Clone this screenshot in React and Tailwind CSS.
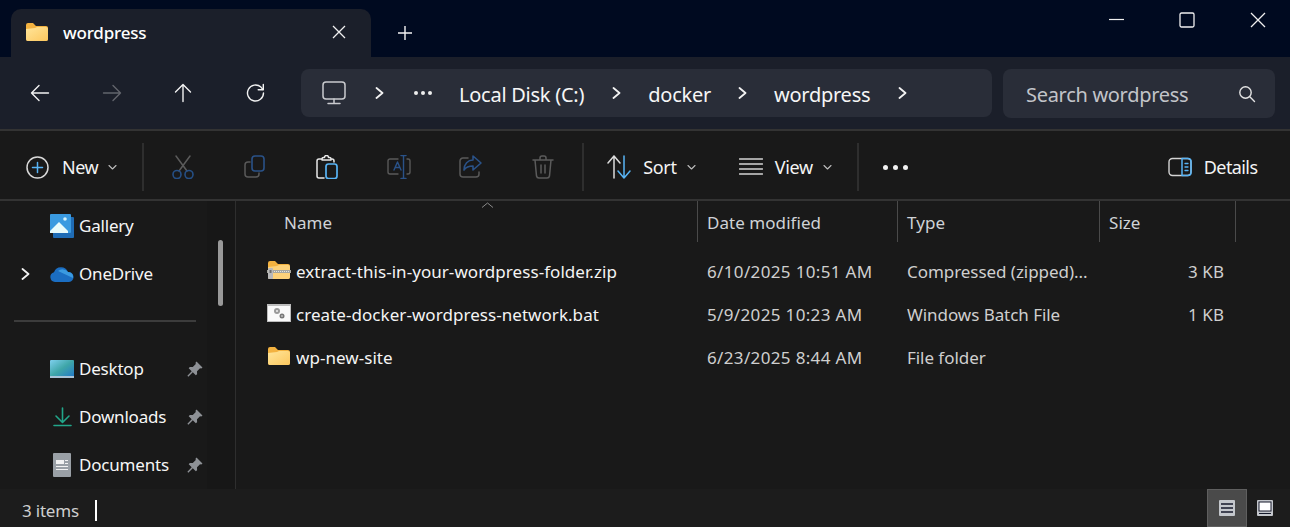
import React from "react";

const Folder = ({ className = "" }) => (
  <svg width="24" height="20" viewBox="0 0 24 20" className={className}>
    <defs>
      <linearGradient id="fg" x1="0" y1="0" x2="1" y2="1">
        <stop offset="0" stopColor="#ffe59a" />
        <stop offset="1" stopColor="#fcc75e" />
      </linearGradient>
    </defs>
    <path d="M1 3a2 2 0 0 1 2-2h5l3 3h10a2 2 0 0 1 2 2v11a2 2 0 0 1-2 2H3a2 2 0 0 1-2-2z" fill="#f3b240" />
    <path d="M1 7l9-1 2-1h9a2 2 0 0 1 2 2v10a2 2 0 0 1-2 2H3a2 2 0 0 1-2-2z" fill="url(#fg)" />
  </svg>
);

const Zip = () => (
  <svg width="24" height="20" viewBox="0 0 24 20">
    <path d="M1 3a2 2 0 0 1 2-2h5l3 3h10a2 2 0 0 1 2 2v11a2 2 0 0 1-2 2H3a2 2 0 0 1-2-2z" fill="#f3b240" />
    <path d="M1 7l9-1 2-1h9a2 2 0 0 1 2 2v10a2 2 0 0 1-2 2H3a2 2 0 0 1-2-2z" fill="#fdd27a" />
    <rect x="0" y="10" width="24" height="3" fill="#a8a8a0" />
    <rect x="1" y="8" width="5" height="11" rx="1" fill="#b9b9b9" />
    <rect x="2.5" y="10" width="2" height="3" fill="#6d6d6d" />
    <path d="M7 11.500h16" stroke="#e6e6e0" strokeDasharray="1 1" />
  </svg>
);

const Bat = () => (
  <svg width="24" height="18" viewBox="0 0 24 18">
    <rect x="0" y="0" width="24" height="18" fill="#bdbdbd" />
    <rect x="1" y="2" width="22" height="15" fill="#fafafa" />
    <circle cx="10" cy="7" r="3" fill="#9a9a9a" />
    <circle cx="10" cy="7" r="1" fill="#eee" />
    <circle cx="15" cy="12" r="2.500" fill="#777" />
    <circle cx="15" cy="12" r="0.800" fill="#eee" />
  </svg>
);

const Stroke = ({ size = 24, children, className = "", vb }) => (
  <svg
    width={size}
    height={size}
    viewBox={vb || `0 0 ${size} ${size}`}
    fill="none"
    strokeLinecap="round"
    strokeLinejoin="round"
    className={"shrink-0 " + className}
  >
    {children}
  </svg>
);

const Chevron = () => (
  <Stroke size={12}>
    <path d="M2.500 1L8.500 6L2.500 11" stroke="#f2f2f2" strokeWidth="1.800" />
  </Stroke>
);

const Down = () => (
  <Stroke size={9}>
    <path d="M1 2.500L4.500 6L8 2.500" stroke="#bdbdbd" strokeWidth="1.100" />
  </Stroke>
);

const Pin = () => (
  <svg width="16" height="16" viewBox="0 0 16 16" className="shrink-0">
    <path d="M9.500 0.500l6 6-1.200 1-1.300-.3-3 3 .1 3-1.300 1.100-3-3L1.300 15.700.4 14.800l4.300-4.600-3-3L2.800 6l3 .1 3-3L8.500 1.700z" fill="#8e9196" />
  </svg>
);

const HeaderCell = ({ w, children }) => (
  <div className="flex h-full shrink-0 items-center border-r border-[#4a4a4a] pl-[9px] pt-[2px] tracking-[0.05px] text-[#cfd2d6]" style={{ width: w }}>
    {children}
  </div>
);

const Row = ({ icon, name, date, type, size }) => (
  <div className="flex h-[43px] items-center tracking-[0.05px] text-[#f4f4f4]">
    <div className="mb-[3px] flex w-[29px] shrink-0 items-center justify-start">{icon}</div>
    <div className="w-[411px] shrink-0 truncate">{name}</div>
    <div className="w-[200px] shrink-0 truncate tracking-[0.35px] text-[#cfcfcf]">{date}</div>
    <div className="w-[200px] shrink-0 truncate tracking-[-0.05px] text-[#cfcfcf]">{type}</div>
    <div className="w-[117px] shrink-0 text-right text-[#cfcfcf]">{size}</div>
  </div>
);

const Side = ({ chevron, icon, name, pin }) => (
  <div className="flex h-[48px] items-center text-[#f6f6f6]">
    <div className="flex w-[50px] shrink-0 items-center pl-[20px]">{chevron && <Chevron />}</div>
    <div className="flex w-[29px] shrink-0 items-center">{icon}</div>
    <div className="w-[108px] shrink-0">{name}</div>
    {pin && <Pin />}
  </div>
);

const TB = ({ ml = 0, children, w = 24 }) => (
  <div className="flex shrink-0 items-center justify-center" style={{ marginLeft: ml, width: w }}>
    {children}
  </div>
);

const Divider = ({ ml }) => <div className="h-[48px] w-[2px] shrink-0 bg-[#2e2e2e]" style={{ marginLeft: ml }} />;

export default function App() {
  return (
    <div
      className="flex h-[527px] w-[1290px] flex-col overflow-hidden bg-[#191919] text-white"
      style={{ fontFamily: '"Noto Sans", "Open Sans", sans-serif' }}
    >
      {/* tab strip */}
      <div className="flex h-[57px] shrink-0 bg-[#000a20]">
        <div className="ml-[11px] mt-[9px] flex h-[48px] w-[360px] items-center rounded-t-[10px] bg-[#1b1f2a]">
          <Folder className="ml-[14px] mb-[2px] shrink-0" />
          <span className="ml-[14px] text-[17px] font-medium tracking-[-0.2px] text-white">wordpress</span>
          <svg width="14" height="14" viewBox="0 0 14 14" fill="none" className="ml-auto mr-[25px] mb-[3px]">
            <path d="M1 1l12 12M13 1L1 13" stroke="#f0f0f0" strokeWidth="1.300" />
          </svg>
        </div>
        <svg width="16" height="16" viewBox="0 0 16 16" fill="none" className="ml-[26px] mt-[25px]">
          <path d="M8 1v14M1 8h14" stroke="#f4f4f4" strokeWidth="1.400" />
        </svg>
        <div className="ml-auto flex pr-[24px] pt-[12px]">
          <svg width="16" height="16" viewBox="0 0 16 16" fill="none">
            <path d="M0 7.500h15" stroke="#f0f0f0" strokeWidth="1.200" />
          </svg>
          <svg width="16" height="16" viewBox="0 0 16 16" fill="none" className="ml-[54px]">
            <rect x="1" y="1" width="14" height="14" rx="1.500" stroke="#f0f0f0" strokeWidth="1.300" />
          </svg>
          <svg width="16" height="16" viewBox="0 0 16 16" fill="none" className="ml-[55px]">
            <path d="M1 1l14 14M15 1L1 15" stroke="#f0f0f0" strokeWidth="1.300" />
          </svg>
        </div>
      </div>

      {/* navigation */}
      <div className="flex h-[72px] shrink-0 items-center bg-[#1b1f2a] pl-[28px]">
        <TB>
          <Stroke size={20}>
            <path d="M1.500 10h17M9 2.500L1.500 10L9 17.500" stroke="#f2f2f2" strokeWidth="1.400" />
          </Stroke>
        </TB>
        <TB ml={48}>
          <Stroke size={20}>
            <path d="M1.500 10h17M11 2.500L18.500 10L11 17.500" stroke="#62656c" strokeWidth="1.400" />
          </Stroke>
        </TB>
        <TB ml={47}>
          <Stroke size={20}>
            <path d="M10 18.500V1.500M2.500 9L10 1.500L17.500 9" stroke="#f2f2f2" strokeWidth="1.400" />
          </Stroke>
        </TB>
        <TB ml={49}>
          <Stroke size={20}>
            <path d="M17.500 10a8 8 0 1 1-2.600-5.900L17 6.500" stroke="#f2f2f2" strokeWidth="1.400" />
            <path d="M17.300 1.500V6.700H12.200" stroke="#f2f2f2" strokeWidth="1.400" />
          </Stroke>
        </TB>
        <div className="ml-[33px] flex h-[48px] w-[691px] shrink-0 items-center rounded-[8px] bg-[#292d38] text-[20px] tracking-[-0.25px] text-[#f6f6f6]">
          <Stroke size={24} className="ml-[21px]">
            <rect x="1" y="1" width="22" height="17" rx="3" stroke="#c9cace" strokeWidth="1.500" />
            <path d="M12 18v4M6 22.500h12" stroke="#c9cace" strokeWidth="1.500" />
          </Stroke>
          <div className="ml-[28px]"><Chevron /></div>
          <div className="ml-[28px] flex w-[18px] justify-between">
            <i className="block h-[4px] w-[4px] rounded-full bg-[#eee]" />
            <i className="block h-[4px] w-[4px] rounded-full bg-[#eee]" />
            <i className="block h-[4px] w-[4px] rounded-full bg-[#eee]" />
          </div>
          <span className="ml-[27px] pt-[4px]">Local Disk (C:)</span>
          <div className="ml-[27px]"><Chevron /></div>
          <span className="ml-[25px] pt-[4px]">docker</span>
          <div className="ml-[26px]"><Chevron /></div>
          <span className="ml-[25px] pt-[4px]">wordpress</span>
          <div className="ml-[27px]"><Chevron /></div>
        </div>
        <div className="ml-[11px] flex h-[49px] w-[272px] shrink-0 items-center justify-between rounded-[8px] bg-[#292d38] pl-[23px] pr-[19px] text-[20px] tracking-[-0.3px] text-[#c2c4c9]">
          <span className="pt-[3px]">Search wordpress</span>
          <Stroke size={18} className="mt-[2px]">
            <circle cx="7.500" cy="7.500" r="5.700" stroke="#e4e4e4" strokeWidth="1.400" />
            <path d="M11.800 11.800L16.500 16.500" stroke="#e4e4e4" strokeWidth="1.400" />
          </Stroke>
        </div>
      </div>

      {/* toolbar */}
      <div className="flex h-[72px] shrink-0 items-center border-y-2 border-[#333333] bg-[#191919] pl-[26px] pt-[4px] text-[18px] tracking-[-0.3px]">
        <Stroke size={23}>
          <circle cx="11.500" cy="11.500" r="10.500" stroke="#d8d8d8" strokeWidth="1.500" />
          <path d="M11.500 6.500v10M6.500 11.500h10" stroke="#58b4f5" strokeWidth="1.500" />
        </Stroke>
        <span className="ml-[13px] tracking-[-0.5px] text-[#f4f4f4]">New</span>
        <div className="ml-[10px]"><Down /></div>
        <Divider ml={25} />
        <TB ml={27}>
          <Stroke size={24}>
            <path d="M5 1l11 15M19 1L8 16" stroke="#5b5b5b" strokeWidth="1.500" />
            <circle cx="6" cy="19.500" r="4" stroke="#254f85" strokeWidth="1.600" />
            <circle cx="18" cy="19.500" r="4" stroke="#254f85" strokeWidth="1.600" />
          </Stroke>
        </TB>
        <TB ml={48}>
          <Stroke size={24}>
            <path d="M7 7H5a3 3 0 0 0-3 3v9a3 3 0 0 0 3 3h8a3 3 0 0 0 3-3v-1" stroke="#595959" strokeWidth="1.500" />
            <rect x="9" y="1" width="12" height="15" rx="3" stroke="#2a5288" strokeWidth="1.600" />
          </Stroke>
        </TB>
        <TB ml={48}>
          <Stroke size={24}>
            <path d="M7 4H4a2 2 0 0 0-2 2v15a2 2 0 0 0 2 2h5" stroke="#e8e8e8" strokeWidth="1.500" />
            <path d="M7 4a1.500 1.500 0 0 1 1.500-1.500h1a2 2 0 0 1 4 0h1A1.500 1.500 0 0 1 16 4v1H7zM16 4h1a2 2 0 0 1 2 2v1" stroke="#e8e8e8" strokeWidth="1.500" />
            <rect x="11" y="9" width="11" height="14.500" rx="2.500" stroke="#58b4f5" strokeWidth="1.700" />
          </Stroke>
        </TB>
        <TB ml={48}>
          <Stroke size={24}>
            <path d="M11 4H3a2 2 0 0 0-2 2v11a2 2 0 0 0 2 2h8M20 4h1a2 2 0 0 1 2 2v11a2 2 0 0 1-2 2h-1" stroke="#595959" strokeWidth="1.400" />
            <path d="M7 15l3.500-8 3.500 8M8.200 12.500h4.600" stroke="#2a5288" strokeWidth="1.400" />
            <path d="M16.500 0.500v23M14 0.500h5M14 23.500h5" stroke="#2a5288" strokeWidth="1.400" />
          </Stroke>
        </TB>
        <TB ml={48}>
          <Stroke size={24}>
            <path d="M9 3H4a3 3 0 0 0-3 3v13a3 3 0 0 0 3 3h13a3 3 0 0 0 3-3v-2" stroke="#595959" strokeWidth="1.500" />
            <path d="M14 1l8 7-8 7v-4c-4 0-7 1-9 4 0-6 4-10 9-10z" stroke="#2a5288" strokeWidth="1.600" />
          </Stroke>
        </TB>
        <TB ml={48}>
          <Stroke size={24}>
            <path d="M2 5h20M4 5l1.500 16a2.500 2.500 0 0 0 2.500 2h8a2.500 2.500 0 0 0 2.500-2L20 5M9 5V3a2 2 0 0 1 2-2h2a2 2 0 0 1 2 2v2M10 10v8M14 10v8" stroke="#5b5b5b" strokeWidth="1.500" />
          </Stroke>
        </TB>
        <Divider ml={27} />
        <Stroke size={24} className="ml-[23px]">
          <path d="M7 23V1M1 8l6-7 6 7" stroke="#dcdcdc" strokeWidth="1.500" />
          <path d="M17 1v22M11 16l6 7 6-7" stroke="#58b4f5" strokeWidth="1.500" />
        </Stroke>
        <span className="ml-[12px] text-[#f4f4f4]">Sort</span>
        <div className="ml-[10px]"><Down /></div>
        <Stroke size={24} className="ml-[43px]">
          <path d="M0.500 4h23M0.500 9h23M0.500 14h23M0.500 19h23" stroke="#d4d4d4" strokeWidth="1.500" />
        </Stroke>
        <span className="ml-[12px] text-[#f4f4f4]">View</span>
        <div className="ml-[10px]"><Down /></div>
        <Divider ml={25} />
        <div className="ml-[24px] flex w-[25px] justify-between">
          <i className="block h-[5px] w-[5px] rounded-full bg-[#f2f2f2]" />
          <i className="block h-[5px] w-[5px] rounded-full bg-[#f2f2f2]" />
          <i className="block h-[5px] w-[5px] rounded-full bg-[#f2f2f2]" />
        </div>
        <Stroke size={24} className="ml-[260px]">
          <rect x="1" y="3.500" width="22" height="17" rx="3.500" stroke="#d4d4d4" strokeWidth="1.400" />
          <path d="M14 3.500h6a3 3 0 0 1 3 3v11a3 3 0 0 1-3 3h-6z" stroke="#58b4f5" strokeWidth="1.500" />
          <path d="M17 8.500h3M17 12h3M17 15.500h3" stroke="#58b4f5" strokeWidth="1.300" />
        </Stroke>
        <span className="ml-[12px] tracking-[-0.6px] text-[#f4f4f4]">Details</span>
      </div>

      {/* body */}
      <div className="flex min-h-0 flex-1 text-[17px] tracking-[-0.2px]">
        <div className="flex w-[207px] shrink-0 flex-col pt-[1px]">
          <Side
            icon={
              <svg width="24" height="24" viewBox="0 0 24 24">
                <rect x="3" y="3" width="21" height="21" rx="1" fill="#1f6cb5" />
                <rect x="0" y="0" width="21" height="19" rx="1" fill="#3a9ae0" />
                <path d="M0 17l9-9 9 9v2H0z" fill="#e8fbfb" />
                <circle cx="15" cy="5" r="1.800" fill="#d5f2f8" />
              </svg>
            }
            name="Gallery"
          />
          <Side
            chevron
            icon={
              <svg width="24" height="16" viewBox="0 0 24 16">
                <path d="M5 16a5 5 0 0 1-1-9.800A7.500 7.500 0 0 1 18 6a5 5 0 0 1 1 10z" fill="#1b6ec2" />
                <path d="M8 5a7 7 0 0 1 10 1 5 5 0 0 1 5 6z" fill="#3a9ae0" />
              </svg>
            }
            name="OneDrive"
          />
          <div className="ml-[14px] mt-[22px] h-[2px] w-[182px] shrink-0 bg-[#3c3c3c]" />
          <div className="h-[23px] shrink-0" />
          <Side
            icon={
              <svg width="24" height="19" viewBox="0 0 24 19">
                <defs>
                  <linearGradient id="dg" x1="0" y1="0" x2="1" y2="1">
                    <stop offset="0" stopColor="#7fd0ee" />
                    <stop offset="0.500" stopColor="#3fa6a8" />
                    <stop offset="1" stopColor="#2278c8" />
                  </linearGradient>
                </defs>
                <rect x="0" y="0" width="24" height="17" rx="1" fill="url(#dg)" />
                <rect x="0" y="16" width="24" height="2" fill="#a9c4d8" />
              </svg>
            }
            name="Desktop"
            pin
          />
          <Side
            icon={
              <Stroke size={20} className="ml-[3px]">
                <path d="M9.500 1v14M3 9l6.500 6.500L16 9M1 18.500h17" stroke="#22a68a" strokeWidth="1.600" />
              </Stroke>
            }
            name="Downloads"
            pin
          />
          <Side
            icon={
              <svg width="18" height="24" viewBox="0 0 18 24" className="ml-[3px]">
                <rect width="18" height="24" rx="1" fill="#9aa0a6" />
                <path d="M3 7h8v4H3zM12 7h3v1h-3zM12 10h3v1h-3zM3 13h12v1H3zM3 16h12v1H3z" fill="#f2f2f2" />
              </svg>
            }
            name="Documents"
            pin
          />
        </div>
        <div className="flex w-[29px] shrink-0 border-r border-[#2e2e2e] bg-[#171717] pl-[11px] pt-[39px]">
          <div className="h-[66px] w-[5px] rounded-full bg-[#999999]" />
        </div>
        <div className="relative flex min-w-0 flex-1 flex-col">
          <svg width="13" height="6" viewBox="0 0 13 6" fill="none" className="absolute left-[245px] top-[1px]">
            <path d="M1 5.500L6.500 1L12 5.500" stroke="#8a8a8a" />
          </svg>
          <div className="flex h-[41px] shrink-0">
            <div className="flex h-full w-[462px] shrink-0 items-center border-r border-[#4a4a4a] pt-[2px] pl-[48px] tracking-[0.05px] text-[#cfd2d6]">Name</div>
            <HeaderCell w={200}>Date modified</HeaderCell>
            <HeaderCell w={202}>Type</HeaderCell>
            <HeaderCell w={136}>Size</HeaderCell>
          </div>
          <div className="pl-[31px] pt-[8px]">
            <Row icon={<Zip />} name="extract-this-in-your-wordpress-folder.zip" date="6/10/2025 10:51 AM" type="Compressed (zipped)..." size="3 KB" />
            <Row icon={<Bat />} name="create-docker-wordpress-network.bat" date="5/9/2025 10:23 AM" type="Windows Batch File" size="1 KB" />
            <Row icon={<Folder />} name="wp-new-site" date="6/23/2025 8:44 AM" type="File folder" />
          </div>
        </div>
      </div>

      {/* status */}
      <div className="flex h-[38px] shrink-0 items-center bg-[#1c1c1c] pl-[22px] text-[17px] tracking-[-0.2px] text-[#cfcfcf]">
        <span className="w-[73px] shrink-0 pt-[5px]">3 items</span>
        <div className="mt-[4px] h-[21px] w-[2px] bg-white" />
        <div className="ml-auto flex h-full items-center pr-[17px]">
          <div className="flex h-full w-[40px] items-center justify-center border border-[#5f5f5f] bg-[#4a4a4a]">
            <svg width="16" height="16" viewBox="0 0 16 16">
              <rect width="16" height="16" rx="1" fill="#c4c7cc" />
              <path d="M2 4h12M2 8h12M2 12h12" stroke="#14192a" strokeWidth="1.300" />
            </svg>
          </div>
          <svg width="16" height="16" viewBox="0 0 16 16" className="ml-[10px]">
            <rect width="16" height="16" rx="1" fill="#c4c7cc" />
            <rect x="2" y="2" width="12" height="9" fill="#ffffff" stroke="#14192a" />
            <path d="M2 13.500h12" stroke="#14192a" />
          </svg>
        </div>
      </div>
    </div>
  );
}
